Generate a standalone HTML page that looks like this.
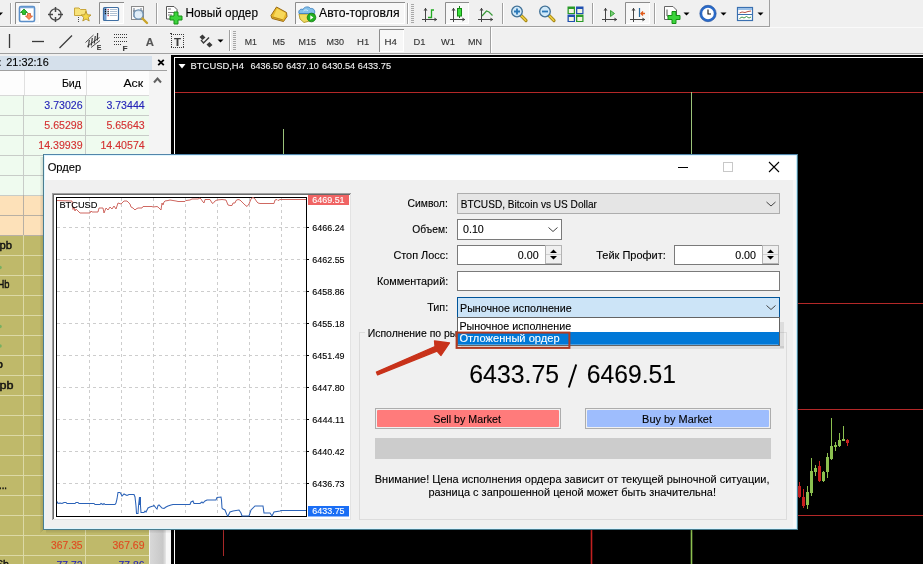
<!DOCTYPE html>
<html><head><meta charset="utf-8"><style>
html,body{margin:0;padding:0;width:923px;height:564px;overflow:hidden;background:#f0f0f0}
svg{display:block;font-family:"Liberation Sans", sans-serif;will-change:transform}
</style></head><body>
<svg width="923" height="564" viewBox="0 0 923 564">
<rect x="0" y="0" width="923" height="564" fill="#f0f0f0" />
<line x1="0" y1="26.5" x2="770" y2="26.5" stroke="#a0a0a0" stroke-width="1" />
<line x1="0" y1="27.5" x2="923" y2="27.5" stroke="#fafafa" stroke-width="1" />
<line x1="769.5" y1="0" x2="769.5" y2="26" stroke="#a0a0a0" stroke-width="1" />
<line x1="10.5" y1="3" x2="10.5" y2="24" stroke="#a0a0a0" stroke-width="1" />
<line x1="11.5" y1="3" x2="11.5" y2="24" stroke="#ffffff" stroke-width="1" />
<line x1="156.5" y1="3" x2="156.5" y2="24" stroke="#a0a0a0" stroke-width="1" />
<line x1="157.5" y1="3" x2="157.5" y2="24" stroke="#ffffff" stroke-width="1" />
<line x1="407.5" y1="3" x2="407.5" y2="24" stroke="#a0a0a0" stroke-width="1" />
<line x1="408.5" y1="3" x2="408.5" y2="24" stroke="#ffffff" stroke-width="1" />
<line x1="502.5" y1="3" x2="502.5" y2="24" stroke="#a0a0a0" stroke-width="1" />
<line x1="503.5" y1="3" x2="503.5" y2="24" stroke="#ffffff" stroke-width="1" />
<line x1="592.5" y1="3" x2="592.5" y2="24" stroke="#a0a0a0" stroke-width="1" />
<line x1="593.5" y1="3" x2="593.5" y2="24" stroke="#ffffff" stroke-width="1" />
<line x1="654.5" y1="3" x2="654.5" y2="24" stroke="#a0a0a0" stroke-width="1" />
<line x1="655.5" y1="3" x2="655.5" y2="24" stroke="#ffffff" stroke-width="1" />
<rect x="15" y="2" width="25" height="22" fill="#f7f7f7" />
<path d="M15.5 24 V2.5 H40" stroke="#8c8c8c" fill="none"/>
<path d="M16 23.5 H39.5 V3" stroke="#ffffff" fill="none"/>
<rect x="99" y="2" width="25" height="22" fill="#f7f7f7" />
<path d="M99.5 24 V2.5 H124" stroke="#8c8c8c" fill="none"/>
<path d="M100 23.5 H123.5 V3" stroke="#ffffff" fill="none"/>
<rect x="295" y="2" width="110" height="22" fill="#f7f7f7" />
<path d="M295.5 24 V2.5 H405" stroke="#8c8c8c" fill="none"/>
<path d="M296 23.5 H404.5 V3" stroke="#ffffff" fill="none"/>
<rect x="445" y="2" width="24" height="22" fill="#f7f7f7" />
<path d="M445.5 24 V2.5 H469" stroke="#8c8c8c" fill="none"/>
<path d="M446 23.5 H468.5 V3" stroke="#ffffff" fill="none"/>
<rect x="625" y="2" width="25" height="22" fill="#f7f7f7" />
<path d="M625.5 24 V2.5 H650" stroke="#8c8c8c" fill="none"/>
<path d="M626 23.5 H649.5 V3" stroke="#ffffff" fill="none"/>
<path d="M-3 12.5 H3 L0 15.5 Z" fill="#000"/>
<path d="M683.5 12.5 H689.5 L686.5 15.5 Z" fill="#000"/>
<path d="M720.5 12.5 H726.5 L723.5 15.5 Z" fill="#000"/>
<path d="M757.5 12.5 H763.5 L760.5 15.5 Z" fill="#000"/>
<rect x="19.5" y="6.5" width="15" height="15" rx="1.5" fill="#fff" stroke="#5b8fc9" stroke-width="1.6"/>
<path d="M20 7.5 H34" stroke="#7aa7d8" stroke-width="1.5"/>
<path d="M24 9 L27.5 12.5 H25.5 V14.5 H22.5 V12.5 H20.5 Z" fill="#2fc42f" stroke="#138a13" stroke-width=".8"/>
<path d="M29 19.5 L32.5 16 H30.5 V13.5 H27.5 V16 H25.5 Z" fill="#ff8a5a" stroke="#d05a2a" stroke-width=".8"/>
<circle cx="55.5" cy="14.5" r="5.6" fill="none" stroke="#474747" stroke-width="1.3"/>
<path d="M55.5 7 V12 M55.5 17 V22 M48 14.5 H53 M58 14.5 H63" stroke="#474747" stroke-width="1.5"/>
<path d="M74.5 8 H79 L80.5 9.5 H86 V15.5 H74.5 Z" fill="#f7e27a" stroke="#c9a63a" stroke-width="1"/>
<path d="M86 11.2 L87.4 14.8 L91 15 L88.2 17.4 L89.2 21 L86 19 L82.8 21 L83.8 17.4 L81 15 L84.6 14.8 Z" fill="#f5d848" stroke="#b8942a" stroke-width=".9"/>
<path d="M78.5 17 V17.8 M78.5 19.2 V20 M78.5 21.2 V22" stroke="#222" stroke-width="1"/>
<rect x="103.5" y="7.5" width="15" height="13" rx="1" fill="#fff" stroke="#3f6fa3" stroke-width="1.2"/>
<rect x="104" y="8" width="2.5" height="12" fill="#6d9bd0"/>
<rect x="107.5" y="8.9" width="1.3" height="1.3" fill="#b03050"/>
<path d="M110 9.5 H117" stroke="#9ab0c8" stroke-width=".8"/>
<rect x="107.5" y="10.9" width="1.3" height="1.3" fill="#222"/>
<path d="M110 11.5 H117" stroke="#9ab0c8" stroke-width=".8"/>
<rect x="107.5" y="12.9" width="1.3" height="1.3" fill="#222"/>
<path d="M110 13.5 H117" stroke="#9ab0c8" stroke-width=".8"/>
<rect x="107.5" y="14.9" width="1.3" height="1.3" fill="#b03050"/>
<path d="M110 15.5 H117" stroke="#9ab0c8" stroke-width=".8"/>
<rect x="104.8" y="8.9" width="1.3" height="1.3" fill="#111"/>
<rect x="104.8" y="10.9" width="1.3" height="1.3" fill="#111"/>
<rect x="104.8" y="12.9" width="1.3" height="1.3" fill="#111"/>
<rect x="131.5" y="6.5" width="12" height="13" fill="#fafafa" stroke="#8a8a8a"/>
<path d="M134 8 V17 M141 8 V14 M133 11 H143" stroke="#5a6a7a" stroke-width=".9"/>
<circle cx="138.5" cy="14.5" r="4.6" fill="#dcebf7" fill-opacity=".85" stroke="#6b8fb0" stroke-width="1.3"/>
<path d="M142.5 18.5 L147 23" stroke="#c9a42a" stroke-width="2.4" stroke-linecap="round"/>
<path d="M166.5 6.5 H174 L177 9.5 V19 H166.5 Z" fill="#fff" stroke="#555" stroke-width="1"/>
<path d="M168 9 H171 M168 12.5 H174 M168 15 H172" stroke="#777" stroke-width="1"/>
<path d="M174 12 H178 V16 H182 V20 H178 V24 H174 V20 H170 V16 H174 Z" fill="#3cd43c" stroke="#169016" stroke-width="1"/>
<text x="185.4" y="17" font-size="11.9" fill="#000" stroke="#000" stroke-width="0.12" text-anchor="start" textLength="72.6" lengthAdjust="spacingAndGlyphs" >Новый ордер</text>
<path d="M276.5 7 L286.5 12.5 L287 16.5 L283.5 21.5 L272 18.5 L271 15.5 Z" fill="#e9b92a" stroke="#9a6a14" stroke-width="1" stroke-linejoin="round"/>
<path d="M277 8.5 L285.5 13 L283 19.5 L273.5 16.5 Z" fill="#f8d85a"/>
<path d="M272.5 17 L283 20" stroke="#b8841e" stroke-width="1"/>
<path d="M299 14 L315 14 L313 20 L304 22.5 L300 19 Z" fill="#f0dc60" stroke="#b0962a" stroke-width=".9" stroke-linejoin="round"/>
<path d="M299 13.5 C298 10 301 8.5 303 9.5 C304 6.5 309 6 310.5 8.5 C313 8 315.5 10 314.5 13.5 Z" fill="#84c0ea" stroke="#3a80c0" stroke-width=".9"/>
<path d="M303.5 11 C305 9.5 307 9.5 308 11" stroke="#d8f0ff" stroke-width=".9" fill="none"/>
<circle cx="311.5" cy="17.5" r="4.3" fill="#22b022" stroke="#0e7a0e" stroke-width=".8"/>
<path d="M310.3 15.2 V19.8 L313.4 17.5 Z" fill="#fff"/>
<text x="319" y="17" font-size="11.9" fill="#000" stroke="#000" stroke-width="0.12" text-anchor="start" textLength="80.5" lengthAdjust="spacingAndGlyphs" >Авто-торговля</text>
<line x1="411" y1="4.5" x2="414" y2="4.5" stroke="#a8a8a8" stroke-width="1" />
<line x1="411" y1="6.5" x2="414" y2="6.5" stroke="#a8a8a8" stroke-width="1" />
<line x1="411" y1="8.5" x2="414" y2="8.5" stroke="#a8a8a8" stroke-width="1" />
<line x1="411" y1="10.5" x2="414" y2="10.5" stroke="#a8a8a8" stroke-width="1" />
<line x1="411" y1="12.5" x2="414" y2="12.5" stroke="#a8a8a8" stroke-width="1" />
<line x1="411" y1="14.5" x2="414" y2="14.5" stroke="#a8a8a8" stroke-width="1" />
<line x1="411" y1="16.5" x2="414" y2="16.5" stroke="#a8a8a8" stroke-width="1" />
<line x1="411" y1="18.5" x2="414" y2="18.5" stroke="#a8a8a8" stroke-width="1" />
<line x1="411" y1="20.5" x2="414" y2="20.5" stroke="#a8a8a8" stroke-width="1" />
<line x1="411" y1="22.5" x2="414" y2="22.5" stroke="#a8a8a8" stroke-width="1" />
<path d="M425.5 8 V22 M422 19.5 H437" stroke="#444" stroke-width="1"/>
<path d="M423.5 10.5 L425.5 8 L427.5 10.5 Z M434.5 17.5 L437 19.5 L434.5 21.5 Z" fill="#444"/>
<path d="M428 17.5 H431.5 V10 H434" stroke="#22aa22" stroke-width="1.3" fill="none"/>
<path d="M453.5 8 V22 M450 19.5 H465" stroke="#444" stroke-width="1"/>
<path d="M451.5 10.5 L453.5 8 L455.5 10.5 Z M462.5 17.5 L465 19.5 L462.5 21.5 Z" fill="#444"/>
<path d="M459.5 6 V18" stroke="#1a7a1a" stroke-width="1"/>
<rect x="457.5" y="8.5" width="4" height="7.5" fill="#3ce03c" stroke="#168816" stroke-width="1"/>
<path d="M481.5 8 V22 M478 19.5 H493" stroke="#444" stroke-width="1"/>
<path d="M479.5 10.5 L481.5 8 L483.5 10.5 Z M490.5 17.5 L493 19.5 L490.5 21.5 Z" fill="#444"/>
<path d="M482 16 L486.5 11 L489 12 L492.5 15.5" stroke="#3a9a3a" stroke-width="1.2" fill="none"/>
<path d="M520.5 15.0 L526 20.5" stroke="#a88a1a" stroke-width="3.2" stroke-linecap="round"/>
<path d="M520.8 15.3 L525.7 20.2" stroke="#f0d040" stroke-width="1.6" stroke-linecap="round"/>
<circle cx="517" cy="11.5" r="5.3" fill="#cfe8f8" stroke="#3f6f95" stroke-width="1.3"/>
<path d="M514 11.5 H520 M517 8.5 V14.5" stroke="#2a78b8" stroke-width="1.8"/>
<path d="M548.5 15.0 L554 20.5" stroke="#a88a1a" stroke-width="3.2" stroke-linecap="round"/>
<path d="M548.8 15.3 L553.7 20.2" stroke="#f0d040" stroke-width="1.6" stroke-linecap="round"/>
<circle cx="545" cy="11.5" r="5.3" fill="#cfe8f8" stroke="#3f6f95" stroke-width="1.3"/>
<path d="M542 11.5 H548" stroke="#2a78b8" stroke-width="1.8"/>
<rect x="567.5" y="6.5" width="7.5" height="7.5" fill="#2a9a2a"/>
<rect x="568.8" y="9" width="5" height="4" fill="#f4f4e0"/>
<rect x="576.0" y="6.5" width="7.5" height="7.5" fill="#2050b0"/>
<rect x="577.3" y="9" width="5" height="4" fill="#f4f4e0"/>
<rect x="567.5" y="14.5" width="7.5" height="7.5" fill="#2050b0"/>
<rect x="568.8" y="17" width="5" height="4" fill="#f4f4e0"/>
<rect x="576.0" y="14.5" width="7.5" height="7.5" fill="#2a9a2a"/>
<rect x="577.3" y="17" width="5" height="4" fill="#f4f4e0"/>
<path d="M605.5 8 V22 M602 19.5 H617" stroke="#444" stroke-width="1"/>
<path d="M603.5 10.5 L605.5 8 L607.5 10.5 Z M614.5 17.5 L617 19.5 L614.5 21.5 Z" fill="#444"/>
<path d="M610.5 10.5 V16.5 L614.5 13.5 Z" fill="#7ad07a" stroke="#2a9a2a" stroke-width=".9"/>
<path d="M633.5 8 V22 M630 19.5 H645" stroke="#444" stroke-width="1"/>
<path d="M631.5 10.5 L633.5 8 L635.5 10.5 Z M642.5 17.5 L645 19.5 L642.5 21.5 Z" fill="#444"/>
<path d="M639.5 8 V17" stroke="#2a6a9a" stroke-width="1.2"/>
<path d="M645 13.5 H641 M643 11.5 L641 13.5 L643 15.5" stroke="#e05a1a" stroke-width="1.3" fill="none"/>
<path d="M664.5 6.5 H673 L676.5 10 V19.5 H664.5 Z" fill="#fff" stroke="#666" stroke-width="1"/>
<path d="M667 9.5 V16 H670" stroke="#555" stroke-width="1" fill="none"/>
<path d="M672 11.5 H676 V15.5 H680 V19.5 H676 V23.5 H672 V19.5 H668 V15.5 H672 Z" fill="#3cd43c" stroke="#169016" stroke-width="1"/>
<circle cx="708" cy="13.5" r="7" fill="#fff" stroke="#2a6ac8" stroke-width="2.4"/>
<circle cx="708" cy="13.5" r="8.2" fill="none" stroke="#1a4a98" stroke-width=".6"/>
<path d="M708 9.5 V14 H711" stroke="#111" stroke-width="1.1" fill="none"/>
<rect x="737.5" y="7.5" width="15" height="13" fill="#fff" stroke="#3a70b0" stroke-width="1.2"/>
<rect x="738" y="8" width="14" height="2" fill="#9ac0e8"/>
<path d="M738 14.5 H752" stroke="#3a70b0" stroke-width="1"/>
<path d="M739.5 13 L742 12 L745 12.5 L748 11.5 L751 11" stroke="#b03a2a" stroke-width=".9" fill="none"/>
<path d="M739.5 18.5 L742 17 L744 18 L746.5 16.5 L749 18 L751 17" stroke="#2a8a3a" stroke-width=".9" fill="none"/>
<line x1="0" y1="53.5" x2="923" y2="53.5" stroke="#a0a0a0" stroke-width="1" />
<line x1="490.5" y1="27" x2="490.5" y2="53" stroke="#a0a0a0" stroke-width="1" />
<line x1="491.5" y1="27" x2="491.5" y2="53" stroke="#ffffff" stroke-width="1" />
<line x1="229.5" y1="30" x2="229.5" y2="51" stroke="#a0a0a0" stroke-width="1" />
<line x1="230.5" y1="30" x2="230.5" y2="51" stroke="#ffffff" stroke-width="1" />
<rect x="379" y="29" width="25" height="23" fill="#f7f7f7" />
<path d="M379.5 52 V29.5 H404" stroke="#8c8c8c" fill="none"/>
<path d="M380 51.5 H403.5 V30" stroke="#ffffff" fill="none"/>
<line x1="233" y1="31.5" x2="236" y2="31.5" stroke="#a8a8a8" stroke-width="1" />
<line x1="233" y1="33.5" x2="236" y2="33.5" stroke="#a8a8a8" stroke-width="1" />
<line x1="233" y1="35.5" x2="236" y2="35.5" stroke="#a8a8a8" stroke-width="1" />
<line x1="233" y1="37.5" x2="236" y2="37.5" stroke="#a8a8a8" stroke-width="1" />
<line x1="233" y1="39.5" x2="236" y2="39.5" stroke="#a8a8a8" stroke-width="1" />
<line x1="233" y1="41.5" x2="236" y2="41.5" stroke="#a8a8a8" stroke-width="1" />
<line x1="233" y1="43.5" x2="236" y2="43.5" stroke="#a8a8a8" stroke-width="1" />
<line x1="233" y1="45.5" x2="236" y2="45.5" stroke="#a8a8a8" stroke-width="1" />
<line x1="233" y1="47.5" x2="236" y2="47.5" stroke="#a8a8a8" stroke-width="1" />
<line x1="233" y1="49.5" x2="236" y2="49.5" stroke="#a8a8a8" stroke-width="1" />
<path d="M9.5 34 V48" stroke="#3a3a3a" stroke-width="1.3"/>
<path d="M32 41.5 H44" stroke="#3a3a3a" stroke-width="1.3"/>
<path d="M59.5 48 L72 35.5" stroke="#3a3a3a" stroke-width="1.3"/>
<path d="M85.5 42.5 L93.5 35 M87 46.5 L99.5 37.5 M91 47.5 L100 40.5" stroke="#3a3a3a" stroke-width="0.9" fill="none"/>
<path d="M88.3 47.5 L89.3 40 M91.3 45.5 L92.3 38 M94.3 43.5 L95.3 36 M97.3 40.5 L97.6 33" stroke="#3a3a3a" stroke-width="1.2" fill="none"/>
<text x="96.8" y="50" font-size="7" fill="#3a3a3a" stroke="#3a3a3a" stroke-width="0.12" text-anchor="start" textLength="4.6" lengthAdjust="spacingAndGlyphs" font-weight="bold">E</text>
<path d="M114 34h1v1h-1z M116 34h1v1h-1z M118 34h1v1h-1z M120 34h1v1h-1z M122 34h1v1h-1z M124 34h1v1h-1z M126 34h1v1h-1z M114 37h1v1h-1z M116 37h1v1h-1z M118 37h1v1h-1z M120 37h1v1h-1z M122 37h1v1h-1z M124 37h1v1h-1z M126 37h1v1h-1z M114 41h1v1h-1z M116 41h1v1h-1z M118 41h1v1h-1z M120 41h1v1h-1z M122 41h1v1h-1z M124 41h1v1h-1z M126 41h1v1h-1z M114 44h1v1h-1z M116 44h1v1h-1z M118 44h1v1h-1z M120 44h1v1h-1z" fill="#3a3a3a"/>
<text x="122.5" y="50.5" font-size="7" fill="#3a3a3a" stroke="#3a3a3a" stroke-width="0.12" text-anchor="start" textLength="5" lengthAdjust="spacingAndGlyphs" font-weight="bold">F</text>
<text x="145.8" y="46.2" font-size="11.5" fill="#555" stroke="#555" stroke-width="0.12" text-anchor="start" textLength="8.2" lengthAdjust="spacingAndGlyphs" font-weight="bold">A</text>
<path d="M171 34h1v1h-1z M171 47h1v1h-1z M173 34h1v1h-1z M173 47h1v1h-1z M175 34h1v1h-1z M175 47h1v1h-1z M177 34h1v1h-1z M177 47h1v1h-1z M179 34h1v1h-1z M179 47h1v1h-1z M181 34h1v1h-1z M181 47h1v1h-1z M183 34h1v1h-1z M183 47h1v1h-1z M171 36h1v1h-1z M183 36h1v1h-1z M171 38h1v1h-1z M183 38h1v1h-1z M171 40h1v1h-1z M183 40h1v1h-1z M171 42h1v1h-1z M183 42h1v1h-1z M171 44h1v1h-1z M183 44h1v1h-1z M171 46h1v1h-1z M183 46h1v1h-1z" fill="#3a3a3a"/>
<path d="M170 33h2v1h-2z" fill="#3a3a3a"/>
<text x="174" y="45.8" font-size="10.5" fill="#3a3a3a" stroke="#3a3a3a" stroke-width="0.12" text-anchor="start" textLength="7" lengthAdjust="spacingAndGlyphs" font-weight="bold">T</text>
<path d="M199.5 37 L202.5 34.5 L205.5 37.5 L202.5 40 Z M206.5 44.5 L209.5 42 L212.5 45 L209.5 47.5 Z" fill="#3a3a3a"/>
<path d="M201 40 L203.5 43 L209 37.5" stroke="#3a3a3a" stroke-width="1.4" fill="none"/>
<path d="M217.5 39.5 H223.5 L220.5 42.5 Z" fill="#000"/>
<text x="244.8" y="44.8" font-size="9.3" fill="#333" stroke="#333" stroke-width="0.12" text-anchor="start" textLength="12.2" lengthAdjust="spacingAndGlyphs" >M1</text>
<text x="272.5" y="44.8" font-size="9.3" fill="#333" stroke="#333" stroke-width="0.12" text-anchor="start" textLength="12.5" lengthAdjust="spacingAndGlyphs" >M5</text>
<text x="298.5" y="44.8" font-size="9.3" fill="#333" stroke="#333" stroke-width="0.12" text-anchor="start" textLength="17.5" lengthAdjust="spacingAndGlyphs" >M15</text>
<text x="326.5" y="44.8" font-size="9.3" fill="#333" stroke="#333" stroke-width="0.12" text-anchor="start" textLength="17.5" lengthAdjust="spacingAndGlyphs" >M30</text>
<text x="357" y="44.8" font-size="9.3" fill="#333" stroke="#333" stroke-width="0.12" text-anchor="start" textLength="12.2" lengthAdjust="spacingAndGlyphs" >H1</text>
<text x="384.6" y="44.8" font-size="9.3" fill="#333" stroke="#333" stroke-width="0.12" text-anchor="start" textLength="12.4" lengthAdjust="spacingAndGlyphs" >H4</text>
<text x="413.5" y="44.8" font-size="9.3" fill="#333" stroke="#333" stroke-width="0.12" text-anchor="start" textLength="12" lengthAdjust="spacingAndGlyphs" >D1</text>
<text x="441" y="44.8" font-size="9.3" fill="#333" stroke="#333" stroke-width="0.12" text-anchor="start" textLength="14" lengthAdjust="spacingAndGlyphs" >W1</text>
<text x="468" y="44.8" font-size="9.3" fill="#333" stroke="#333" stroke-width="0.12" text-anchor="start" textLength="14" lengthAdjust="spacingAndGlyphs" >MN</text>
<rect x="0" y="54" width="171" height="510" fill="#f0f0f0" />
<rect x="0" y="56" width="152" height="14" fill="#d5e0eb" />
<rect x="0" y="70" width="149" height="25" fill="#fdfdfd" />
<line x1="24.5" y1="70" x2="24.5" y2="95" stroke="#e0e0e0" stroke-width="1" />
<line x1="86.5" y1="70" x2="86.5" y2="95" stroke="#e0e0e0" stroke-width="1" />
<line x1="0" y1="95.5" x2="149" y2="95.5" stroke="#d8d8d8" stroke-width="1" />
<rect x="0" y="96" width="149" height="19" fill="#effbef" />
<line x1="0" y1="115.5" x2="149" y2="115.5" stroke="#c8ccc8" stroke-width="1" />
<line x1="23.5" y1="95" x2="23.5" y2="115" stroke="#c8ccc8" stroke-width="1" />
<line x1="85.5" y1="95" x2="85.5" y2="115" stroke="#c8ccc8" stroke-width="1" />
<rect x="0" y="116" width="149" height="19" fill="#effbef" />
<line x1="0" y1="135.5" x2="149" y2="135.5" stroke="#c8ccc8" stroke-width="1" />
<line x1="23.5" y1="115" x2="23.5" y2="135" stroke="#c8ccc8" stroke-width="1" />
<line x1="85.5" y1="115" x2="85.5" y2="135" stroke="#c8ccc8" stroke-width="1" />
<rect x="0" y="136" width="149" height="19" fill="#effbef" />
<line x1="0" y1="155.5" x2="149" y2="155.5" stroke="#c8ccc8" stroke-width="1" />
<line x1="23.5" y1="135" x2="23.5" y2="155" stroke="#c8ccc8" stroke-width="1" />
<line x1="85.5" y1="135" x2="85.5" y2="155" stroke="#c8ccc8" stroke-width="1" />
<rect x="0" y="156" width="149" height="19" fill="#effbef" />
<line x1="0" y1="175.5" x2="149" y2="175.5" stroke="#c8ccc8" stroke-width="1" />
<line x1="23.5" y1="155" x2="23.5" y2="175" stroke="#c8ccc8" stroke-width="1" />
<line x1="85.5" y1="155" x2="85.5" y2="175" stroke="#c8ccc8" stroke-width="1" />
<rect x="0" y="176" width="149" height="19" fill="#effbef" />
<line x1="0" y1="195.5" x2="149" y2="195.5" stroke="#c8ccc8" stroke-width="1" />
<line x1="23.5" y1="175" x2="23.5" y2="195" stroke="#c8ccc8" stroke-width="1" />
<line x1="85.5" y1="175" x2="85.5" y2="195" stroke="#c8ccc8" stroke-width="1" />
<rect x="0" y="196" width="149" height="19" fill="#fde1b9" />
<line x1="0" y1="215.5" x2="149" y2="215.5" stroke="#b8b0a4" stroke-width="1" />
<line x1="23.5" y1="195" x2="23.5" y2="215" stroke="#b8b0a4" stroke-width="1" />
<line x1="85.5" y1="195" x2="85.5" y2="215" stroke="#b8b0a4" stroke-width="1" />
<rect x="0" y="216" width="149" height="19" fill="#fde1b9" />
<line x1="0" y1="235.5" x2="149" y2="235.5" stroke="#b8b0a4" stroke-width="1" />
<line x1="23.5" y1="215" x2="23.5" y2="235" stroke="#b8b0a4" stroke-width="1" />
<line x1="85.5" y1="215" x2="85.5" y2="235" stroke="#b8b0a4" stroke-width="1" />
<rect x="0" y="236" width="149" height="19" fill="#bfb96a" />
<line x1="0" y1="255.5" x2="149" y2="255.5" stroke="#dcd9a6" stroke-width="1" />
<line x1="23.5" y1="235" x2="23.5" y2="255" stroke="#dcd9a6" stroke-width="1" />
<line x1="85.5" y1="235" x2="85.5" y2="255" stroke="#dcd9a6" stroke-width="1" />
<rect x="0" y="256" width="149" height="19" fill="#bfb96a" />
<line x1="0" y1="275.5" x2="149" y2="275.5" stroke="#dcd9a6" stroke-width="1" />
<line x1="23.5" y1="255" x2="23.5" y2="275" stroke="#dcd9a6" stroke-width="1" />
<line x1="85.5" y1="255" x2="85.5" y2="275" stroke="#dcd9a6" stroke-width="1" />
<rect x="0" y="276" width="149" height="19" fill="#bfb96a" />
<line x1="0" y1="295.5" x2="149" y2="295.5" stroke="#dcd9a6" stroke-width="1" />
<line x1="23.5" y1="275" x2="23.5" y2="295" stroke="#dcd9a6" stroke-width="1" />
<line x1="85.5" y1="275" x2="85.5" y2="295" stroke="#dcd9a6" stroke-width="1" />
<rect x="0" y="296" width="149" height="19" fill="#bfb96a" />
<line x1="0" y1="315.5" x2="149" y2="315.5" stroke="#dcd9a6" stroke-width="1" />
<line x1="23.5" y1="295" x2="23.5" y2="315" stroke="#dcd9a6" stroke-width="1" />
<line x1="85.5" y1="295" x2="85.5" y2="315" stroke="#dcd9a6" stroke-width="1" />
<rect x="0" y="316" width="149" height="19" fill="#bfb96a" />
<line x1="0" y1="335.5" x2="149" y2="335.5" stroke="#dcd9a6" stroke-width="1" />
<line x1="23.5" y1="315" x2="23.5" y2="335" stroke="#dcd9a6" stroke-width="1" />
<line x1="85.5" y1="315" x2="85.5" y2="335" stroke="#dcd9a6" stroke-width="1" />
<rect x="0" y="336" width="149" height="19" fill="#bfb96a" />
<line x1="0" y1="355.5" x2="149" y2="355.5" stroke="#dcd9a6" stroke-width="1" />
<line x1="23.5" y1="335" x2="23.5" y2="355" stroke="#dcd9a6" stroke-width="1" />
<line x1="85.5" y1="335" x2="85.5" y2="355" stroke="#dcd9a6" stroke-width="1" />
<rect x="0" y="356" width="149" height="19" fill="#bfb96a" />
<line x1="0" y1="375.5" x2="149" y2="375.5" stroke="#dcd9a6" stroke-width="1" />
<line x1="23.5" y1="355" x2="23.5" y2="375" stroke="#dcd9a6" stroke-width="1" />
<line x1="85.5" y1="355" x2="85.5" y2="375" stroke="#dcd9a6" stroke-width="1" />
<rect x="0" y="376" width="149" height="19" fill="#bfb96a" />
<line x1="0" y1="395.5" x2="149" y2="395.5" stroke="#dcd9a6" stroke-width="1" />
<line x1="23.5" y1="375" x2="23.5" y2="395" stroke="#dcd9a6" stroke-width="1" />
<line x1="85.5" y1="375" x2="85.5" y2="395" stroke="#dcd9a6" stroke-width="1" />
<rect x="0" y="396" width="149" height="19" fill="#bfb96a" />
<line x1="0" y1="415.5" x2="149" y2="415.5" stroke="#dcd9a6" stroke-width="1" />
<line x1="23.5" y1="395" x2="23.5" y2="415" stroke="#dcd9a6" stroke-width="1" />
<line x1="85.5" y1="395" x2="85.5" y2="415" stroke="#dcd9a6" stroke-width="1" />
<rect x="0" y="416" width="149" height="19" fill="#bfb96a" />
<line x1="0" y1="435.5" x2="149" y2="435.5" stroke="#dcd9a6" stroke-width="1" />
<line x1="23.5" y1="415" x2="23.5" y2="435" stroke="#dcd9a6" stroke-width="1" />
<line x1="85.5" y1="415" x2="85.5" y2="435" stroke="#dcd9a6" stroke-width="1" />
<rect x="0" y="436" width="149" height="19" fill="#bfb96a" />
<line x1="0" y1="455.5" x2="149" y2="455.5" stroke="#dcd9a6" stroke-width="1" />
<line x1="23.5" y1="435" x2="23.5" y2="455" stroke="#dcd9a6" stroke-width="1" />
<line x1="85.5" y1="435" x2="85.5" y2="455" stroke="#dcd9a6" stroke-width="1" />
<rect x="0" y="456" width="149" height="19" fill="#bfb96a" />
<line x1="0" y1="475.5" x2="149" y2="475.5" stroke="#dcd9a6" stroke-width="1" />
<line x1="23.5" y1="455" x2="23.5" y2="475" stroke="#dcd9a6" stroke-width="1" />
<line x1="85.5" y1="455" x2="85.5" y2="475" stroke="#dcd9a6" stroke-width="1" />
<rect x="0" y="476" width="149" height="19" fill="#bfb96a" />
<line x1="0" y1="495.5" x2="149" y2="495.5" stroke="#dcd9a6" stroke-width="1" />
<line x1="23.5" y1="475" x2="23.5" y2="495" stroke="#dcd9a6" stroke-width="1" />
<line x1="85.5" y1="475" x2="85.5" y2="495" stroke="#dcd9a6" stroke-width="1" />
<rect x="0" y="496" width="149" height="19" fill="#bfb96a" />
<line x1="0" y1="515.5" x2="149" y2="515.5" stroke="#dcd9a6" stroke-width="1" />
<line x1="23.5" y1="495" x2="23.5" y2="515" stroke="#dcd9a6" stroke-width="1" />
<line x1="85.5" y1="495" x2="85.5" y2="515" stroke="#dcd9a6" stroke-width="1" />
<rect x="0" y="516" width="149" height="19" fill="#bfb96a" />
<line x1="0" y1="535.5" x2="149" y2="535.5" stroke="#dcd9a6" stroke-width="1" />
<line x1="23.5" y1="515" x2="23.5" y2="535" stroke="#dcd9a6" stroke-width="1" />
<line x1="85.5" y1="515" x2="85.5" y2="535" stroke="#dcd9a6" stroke-width="1" />
<rect x="0" y="536" width="149" height="19" fill="#bfb96a" />
<line x1="0" y1="555.5" x2="149" y2="555.5" stroke="#dcd9a6" stroke-width="1" />
<line x1="23.5" y1="535" x2="23.5" y2="555" stroke="#dcd9a6" stroke-width="1" />
<line x1="85.5" y1="535" x2="85.5" y2="555" stroke="#dcd9a6" stroke-width="1" />
<rect x="0" y="556" width="149" height="19" fill="#bfb96a" />
<line x1="0" y1="575.5" x2="149" y2="575.5" stroke="#dcd9a6" stroke-width="1" />
<line x1="23.5" y1="555" x2="23.5" y2="575" stroke="#dcd9a6" stroke-width="1" />
<line x1="85.5" y1="555" x2="85.5" y2="575" stroke="#dcd9a6" stroke-width="1" />
<rect x="149" y="70" width="22" height="494" fill="#f4f4f4" />
<line x1="0" y1="70.5" x2="167" y2="70.5" stroke="#a0a0a0" stroke-width="1" />
<text x="-1.5" y="65.6" font-size="10.6" fill="#000" stroke="#000" stroke-width="0.12" text-anchor="start" >:</text>
<text x="6.3" y="65.6" font-size="10.6" fill="#000" stroke="#000" stroke-width="0.12" text-anchor="start" textLength="42.4" lengthAdjust="spacingAndGlyphs" >21:32:16</text>
<path d="M158.2 59.8 L163.8 65.2 M163.8 59.8 L158.2 65.2" stroke="#000" stroke-width="1.8"/>
<text x="80.9" y="86.6" font-size="10.6" fill="#000" stroke="#000" stroke-width="0.12" text-anchor="end" textLength="19" lengthAdjust="spacingAndGlyphs" >Бид</text>
<text x="143" y="86.6" font-size="10.6" fill="#000" stroke="#000" stroke-width="0.12" text-anchor="end" textLength="19.6" lengthAdjust="spacingAndGlyphs" >Аск</text>
<path d="M154 82.5 L157.5 78.5 L161 82.5" stroke="#606060" stroke-width="2" fill="none"/>
<text x="82.6" y="108.6" font-size="10.6" fill="#2424b8" stroke="#2424b8" stroke-width="0.12" text-anchor="end" textLength="38.3" lengthAdjust="spacingAndGlyphs" >3.73026</text>
<text x="144.7" y="108.6" font-size="10.6" fill="#2424b8" stroke="#2424b8" stroke-width="0.12" text-anchor="end" textLength="38.3" lengthAdjust="spacingAndGlyphs" >3.73444</text>
<text x="82.6" y="128.6" font-size="10.6" fill="#d43030" stroke="#d43030" stroke-width="0.12" text-anchor="end" textLength="38.3" lengthAdjust="spacingAndGlyphs" >5.65298</text>
<text x="144.7" y="128.6" font-size="10.6" fill="#d43030" stroke="#d43030" stroke-width="0.12" text-anchor="end" textLength="38.3" lengthAdjust="spacingAndGlyphs" >5.65643</text>
<text x="82.6" y="148.5" font-size="10.6" fill="#d43030" stroke="#d43030" stroke-width="0.12" text-anchor="end" textLength="44.3" lengthAdjust="spacingAndGlyphs" >14.39939</text>
<text x="144.7" y="148.5" font-size="10.6" fill="#d43030" stroke="#d43030" stroke-width="0.12" text-anchor="end" textLength="44.3" lengthAdjust="spacingAndGlyphs" >14.40574</text>
<text x="82.6" y="548.8" font-size="10.6" fill="#e04a20" stroke="#e04a20" stroke-width="0.12" text-anchor="end" textLength="31.5" lengthAdjust="spacingAndGlyphs" >367.35</text>
<text x="144.5" y="548.8" font-size="10.6" fill="#e04a20" stroke="#e04a20" stroke-width="0.12" text-anchor="end" textLength="32" lengthAdjust="spacingAndGlyphs" >367.69</text>
<text x="82.6" y="568.5" font-size="10.6" fill="#2424b8" stroke="#2424b8" stroke-width="0.12" text-anchor="end" textLength="26" lengthAdjust="spacingAndGlyphs" >77.72</text>
<text x="144.5" y="568.5" font-size="10.6" fill="#2424b8" stroke="#2424b8" stroke-width="0.12" text-anchor="end" textLength="26" lengthAdjust="spacingAndGlyphs" >77.86</text>
<text x="-0.5" y="248.5" font-size="11.5" fill="#111" stroke="#111" stroke-width="0.45" text-anchor="start" textLength="12.5" lengthAdjust="spacingAndGlyphs" >pb</text>
<text x="-2.5" y="288.4" font-size="11.5" fill="#111" stroke="#111" stroke-width="0.45" text-anchor="start" textLength="12" lengthAdjust="spacingAndGlyphs" >Hb</text>
<text x="-4" y="367.6" font-size="11.5" fill="#111" stroke="#111" stroke-width="0.45" text-anchor="start" textLength="7" lengthAdjust="spacingAndGlyphs" >o</text>
<text x="-0.5" y="388.5" font-size="11.5" fill="#111" stroke="#111" stroke-width="0.45" text-anchor="start" textLength="14" lengthAdjust="spacingAndGlyphs" >pb</text>
<text x="-1" y="488.5" font-size="11.5" fill="#111" stroke="#111" stroke-width="0.45" text-anchor="start" textLength="8" lengthAdjust="spacingAndGlyphs" >...</text>
<text x="-4" y="568" font-size="11.5" fill="#111" stroke="#111" stroke-width="0.45" text-anchor="start" textLength="13" lengthAdjust="spacingAndGlyphs" >Sh</text>
<circle cx="0" cy="267.5" r="1.8" fill="#78b060"/>
<circle cx="0" cy="326.5" r="1.8" fill="#78b060"/>
<circle cx="0" cy="346" r="1.8" fill="#78b060"/>
<defs><linearGradient id="thumb" x1="0" x2="1"><stop offset="0" stop-color="#d8d8d8"/><stop offset="0.8" stop-color="#c8c8c8"/><stop offset="1" stop-color="#e8e8e8"/></linearGradient></defs>
<rect x="150" y="530" width="16" height="34" fill="url(#thumb)" />
<rect x="166" y="530" width="5" height="34" fill="#f8f8f8" />
<rect x="171" y="55" width="752" height="509" fill="#000000" />
<line x1="174.5" y1="57" x2="174.5" y2="564" stroke="#ffffff" stroke-width="1" />
<line x1="174" y1="57.5" x2="923" y2="57.5" stroke="#ffffff" stroke-width="1" />
<line x1="175" y1="92.5" x2="923" y2="92.5" stroke="#b42828" stroke-width="1.2" />
<line x1="175" y1="303.5" x2="923" y2="303.5" stroke="#b42828" stroke-width="1.2" />
<line x1="175" y1="409.5" x2="923" y2="409.5" stroke="#b42828" stroke-width="1.2" />
<line x1="175" y1="515.5" x2="923" y2="515.5" stroke="#b42828" stroke-width="1.2" />
<line x1="283.5" y1="129" x2="283.5" y2="154" stroke="#9bc37a" stroke-width="1" />
<line x1="691.5" y1="92" x2="691.5" y2="154" stroke="#9bc37a" stroke-width="1" />
<line x1="223.5" y1="530" x2="223.5" y2="556" stroke="#a82828" stroke-width="1" />
<line x1="591.5" y1="530" x2="591.5" y2="564" stroke="#c02020" stroke-width="1.6" />
<line x1="691.5" y1="530" x2="691.5" y2="564" stroke="#8cc050" stroke-width="1.6" />
<path d="M178.5 64 H185.5 L182 68.5 Z" fill="#ffffff"/>
<text x="190.6" y="69" font-size="9.5" fill="#f0f0f0" stroke="#f0f0f0" stroke-width="0.12" text-anchor="start" textLength="53.3" lengthAdjust="spacingAndGlyphs" >BTCUSD,H4</text>
<text x="250.4" y="69" font-size="9.5" fill="#f0f0f0" stroke="#f0f0f0" stroke-width="0.12" text-anchor="start" textLength="32.6" lengthAdjust="spacingAndGlyphs" >6436.50</text>
<text x="286.3" y="69" font-size="9.5" fill="#f0f0f0" stroke="#f0f0f0" stroke-width="0.12" text-anchor="start" textLength="32.5" lengthAdjust="spacingAndGlyphs" >6437.10</text>
<text x="322" y="69" font-size="9.5" fill="#f0f0f0" stroke="#f0f0f0" stroke-width="0.12" text-anchor="start" textLength="33.2" lengthAdjust="spacingAndGlyphs" >6430.54</text>
<text x="357.8" y="69" font-size="9.5" fill="#f0f0f0" stroke="#f0f0f0" stroke-width="0.12" text-anchor="start" textLength="33.2" lengthAdjust="spacingAndGlyphs" >6433.75</text>
<line x1="799.5" y1="482" x2="799.5" y2="498" stroke="#c82020" stroke-width="1" />
<rect x="798.0" y="486" width="3" height="11" fill="#c82020" />
<line x1="803.5" y1="489" x2="803.5" y2="508" stroke="#c82020" stroke-width="1" />
<rect x="802.0" y="497" width="3" height="9" fill="#c82020" />
<line x1="807.5" y1="486" x2="807.5" y2="509" stroke="#8cc050" stroke-width="1" />
<rect x="806.0" y="492" width="3" height="13" fill="#8cc050" />
<line x1="811.5" y1="458" x2="811.5" y2="496" stroke="#8cc050" stroke-width="1" />
<rect x="810.0" y="471" width="3" height="22" fill="#8cc050" />
<line x1="815.5" y1="465" x2="815.5" y2="476" stroke="#8cc050" stroke-width="1" />
<rect x="814.0" y="468" width="3" height="4" fill="#8cc050" />
<line x1="819.5" y1="461" x2="819.5" y2="482" stroke="#c82020" stroke-width="1" />
<rect x="818.0" y="466" width="3" height="15" fill="#c82020" />
<line x1="823.5" y1="471" x2="823.5" y2="482" stroke="#8cc050" stroke-width="1" />
<rect x="822.0" y="472" width="3" height="9" fill="#8cc050" />
<line x1="827.5" y1="453" x2="827.5" y2="478" stroke="#8cc050" stroke-width="1" />
<rect x="826.0" y="457" width="3" height="15" fill="#8cc050" />
<line x1="831.5" y1="418" x2="831.5" y2="460" stroke="#8cc050" stroke-width="1" />
<rect x="830.0" y="446" width="3" height="13" fill="#8cc050" />
<line x1="835.5" y1="442" x2="835.5" y2="451" stroke="#8cc050" stroke-width="1" />
<rect x="834.0" y="445" width="3" height="2" fill="#8cc050" />
<line x1="839.5" y1="433" x2="839.5" y2="447" stroke="#8cc050" stroke-width="1" />
<rect x="838.0" y="440" width="3" height="6" fill="#8cc050" />
<line x1="843.5" y1="426" x2="843.5" y2="441" stroke="#8cc050" stroke-width="1" />
<rect x="842.0" y="439" width="3" height="2" fill="#8cc050" />
<line x1="847.5" y1="439" x2="847.5" y2="446" stroke="#c82020" stroke-width="1" />
<rect x="846.0" y="440" width="3" height="3" fill="#c82020" />
<rect x="40" y="157" width="1" height="376" fill="#000" opacity="0.04"/>
<rect x="46" y="532" width="755" height="1" fill="#000" opacity="0.04"/>
<rect x="41" y="157" width="1" height="375" fill="#000" opacity="0.07"/>
<rect x="46" y="531" width="755" height="1" fill="#000" opacity="0.07"/>
<rect x="42" y="157" width="1" height="374" fill="#000" opacity="0.11"/>
<rect x="46" y="530" width="755" height="1" fill="#000" opacity="0.11"/>
<rect x="800" y="160" width="1" height="372" fill="#000" opacity="0.024"/>
<rect x="799" y="160" width="1" height="371" fill="#000" opacity="0.042"/>
<rect x="798" y="160" width="1" height="370" fill="#000" opacity="0.066"/>
<rect x="43" y="154" width="755" height="376" fill="#f0f0f0" />
<rect x="44" y="155" width="753" height="25" fill="#ffffff" />
<line x1="43" y1="154.5" x2="798" y2="154.5" stroke="#5285aa" stroke-width="1" />
<line x1="43.5" y1="154" x2="43.5" y2="530" stroke="#4a7d90" stroke-width="1" />
<line x1="797.5" y1="154" x2="797.5" y2="530" stroke="#4a7d90" stroke-width="1" />
<line x1="43" y1="529.5" x2="798" y2="529.5" stroke="#4a7d90" stroke-width="1" />
<line x1="44" y1="155.5" x2="797" y2="155.5" stroke="#e0f6ff" stroke-width="1" />
<line x1="44.5" y1="155" x2="44.5" y2="529" stroke="#e0f6ff" stroke-width="1" />
<line x1="44" y1="528.5" x2="797" y2="528.5" stroke="#e0f6ff" stroke-width="1" />
<rect x="793" y="180" width="3" height="348" fill="#f7f7f7" />
<line x1="796.5" y1="155" x2="796.5" y2="529" stroke="#c8ecfa" stroke-width="1" />
<text x="47.7" y="170.6" font-size="11.6" fill="#000" stroke="#000" stroke-width="0.12" text-anchor="start" textLength="33.5" lengthAdjust="spacingAndGlyphs" >Ордер</text>
<path d="M678 167.5 H688" stroke="#000" stroke-width="1"/>
<rect x="723.5" y="162.5" width="9" height="9" fill="none" stroke="#c8c8c8"/>
<path d="M769 162 L779 172 M779 162 L769 172" stroke="#000" stroke-width="1.1"/>
<rect x="52" y="193" width="299" height="327" fill="#ffffff" />
<line x1="52" y1="193.5" x2="351" y2="193.5" stroke="#a0a0a0" stroke-width="1" />
<line x1="52.5" y1="193" x2="52.5" y2="520" stroke="#a0a0a0" stroke-width="1" />
<line x1="53" y1="194.5" x2="350" y2="194.5" stroke="#696969" stroke-width="1" />
<line x1="53.5" y1="194" x2="53.5" y2="519" stroke="#696969" stroke-width="1" />
<line x1="53" y1="519.5" x2="351" y2="519.5" stroke="#e3e3e3" stroke-width="1" />
<line x1="350.5" y1="194" x2="350.5" y2="520" stroke="#e3e3e3" stroke-width="1" />
<rect x="56.5" y="197.5" width="250" height="319" fill="none" stroke="#000" stroke-width="1"/>
<path d="M89.5 198 V516 M121.5 198 V516 M153.5 198 V516 M185.5 198 V516 M217.5 198 V516 M249.5 198 V516 M281.5 198 V516 M57 227.5 H306 M57 259.5 H306 M57 291.5 H306 M57 323.5 H306 M57 355.5 H306 M57 387.5 H306 M57 419.5 H306 M57 451.5 H306 M57 483.5 H306" stroke="#cdcdcd" stroke-dasharray="3 3" fill="none"/>
<path d="M307 227.5 H309 M307 259.5 H309 M307 291.5 H309 M307 323.5 H309 M307 355.5 H309 M307 387.5 H309 M307 419.5 H309 M307 451.5 H309 M307 483.5 H309" stroke="#000" fill="none"/>
<text x="312.3" y="230.9" font-size="9.9" fill="#000" stroke="#000" stroke-width="0.12" text-anchor="start" textLength="32.3" lengthAdjust="spacingAndGlyphs" >6466.24</text>
<text x="312.3" y="262.9" font-size="9.9" fill="#000" stroke="#000" stroke-width="0.12" text-anchor="start" textLength="32.3" lengthAdjust="spacingAndGlyphs" >6462.55</text>
<text x="312.3" y="294.9" font-size="9.9" fill="#000" stroke="#000" stroke-width="0.12" text-anchor="start" textLength="32.3" lengthAdjust="spacingAndGlyphs" >6458.86</text>
<text x="312.3" y="326.9" font-size="9.9" fill="#000" stroke="#000" stroke-width="0.12" text-anchor="start" textLength="32.3" lengthAdjust="spacingAndGlyphs" >6455.18</text>
<text x="312.3" y="358.9" font-size="9.9" fill="#000" stroke="#000" stroke-width="0.12" text-anchor="start" textLength="32.3" lengthAdjust="spacingAndGlyphs" >6451.49</text>
<text x="312.3" y="390.9" font-size="9.9" fill="#000" stroke="#000" stroke-width="0.12" text-anchor="start" textLength="32.3" lengthAdjust="spacingAndGlyphs" >6447.80</text>
<text x="312.3" y="422.9" font-size="9.9" fill="#000" stroke="#000" stroke-width="0.12" text-anchor="start" textLength="32.3" lengthAdjust="spacingAndGlyphs" >6444.11</text>
<text x="312.3" y="454.9" font-size="9.9" fill="#000" stroke="#000" stroke-width="0.12" text-anchor="start" textLength="32.3" lengthAdjust="spacingAndGlyphs" >6440.42</text>
<text x="312.3" y="486.9" font-size="9.9" fill="#000" stroke="#000" stroke-width="0.12" text-anchor="start" textLength="32.3" lengthAdjust="spacingAndGlyphs" >6436.73</text>
<rect x="308" y="195" width="41" height="10" fill="#f06464" />
<text x="312.3" y="202.8" font-size="9.9" fill="#ffffff" stroke="#ffffff" stroke-width="0.12" text-anchor="start" textLength="32.3" lengthAdjust="spacingAndGlyphs" >6469.51</text>
<rect x="308" y="506" width="41" height="10.5" fill="#1a6ef5" />
<text x="312.3" y="514.4" font-size="9.9" fill="#ffffff" stroke="#ffffff" stroke-width="0.12" text-anchor="start" textLength="32.3" lengthAdjust="spacingAndGlyphs" >6433.75</text>
<polyline points="57,200.5 72,201 73,209.5 74,207 75,211 76,209 80,213 90,213 91,211 92,212 98,212 99,208 103,208 104,213 106,208 108,210 110,207 112,209 114,206 116,209 118,203 121,204 124,201 127,201 130,204 131,207 133,208 135,210 136,209 138,208 142,208 143,206.5 152,206.5 153,207 157,206.5 158,207 160,209 161,210 162,203 163,205 164,202 165,201 168,200.5 170,200 176,201 178,201.5 185,201.5 186,200.5 190,200 192,199 198,199 200,198 201,199 203,202 204,203 205,199.5 210,199.5 212,203 213,203.5 215,201 217,200 222,199.5 226,200 228,205 230,205.5 232,205.5 233,203 235,203 236,200.5 238,199.5 240,200 243,203 245,205 247,206.5 249,204 251,199 252,197.8 254,197.8 255,199 257,202 258,203 260,203.5 274,203.5 275,200 277,199.5 278,200.5 280,199.5 306,199.5" fill="none" stroke="#cc6058" stroke-width="0.95"/>
<polyline points="57,501.5 58,503.5 60,503 62,503.5 64,502.5 66,502.5 67,503.5 75,503.5 76,502.5 78,502.5 79,503.5 94,503.5 95,504.5 100,504.5 101,503.5 103,504.5 104,503.5 105,504.5 115,504.5 116,503 117,499 118,492.5 120,492.5 121,494 122,496 124,494 126,495 127,495.5 129,494.5 134,494.5 135,497 136,506 136.5,513.5 138,513.5 138.5,506 139.5,497 140.5,504 140.5,506 141,512.5 144,512.5 145,511 146,512 148,508 150,507 153,506 154,505.5 156,508 157,509 158,505.5 159,505 162,508 164,508.5 166,507 168,506 171,505 173,504.5 190,504.5 191,502 193,501 194,503.5 200,503.5 202,502 203,503 205,501 207,500 216,500 217,497.5 221,497 221.5,500 222,508 223,509 225,510 227,515 228,516 230,512 233,511 239,510 241,513 242,516 249,516 251,510 255,506 263,506 264,513 270,513 272,516 274,512 280,511 281,510.5 306,510.5" fill="none" stroke="#2a62b8" stroke-width="1.05"/>
<path d="M140 497 V505" stroke="#2a62b8" stroke-width="2"/>
<text x="59.4" y="207.5" font-size="9.9" fill="#000" stroke="#000" stroke-width="0.12" text-anchor="start" textLength="38.1" lengthAdjust="spacingAndGlyphs" >BTCUSD</text>
<text x="447.8" y="206.8" font-size="11.1" fill="#000" stroke="#000" stroke-width="0.12" text-anchor="end" textLength="40.3" lengthAdjust="spacingAndGlyphs" >Символ:</text>
<rect x="457.5" y="193.5" width="322" height="20" fill="#e5e5e5" stroke="#adadad"/>
<text x="460.7" y="208" font-size="11.1" fill="#000" stroke="#000" stroke-width="0.12" text-anchor="start" textLength="136.3" lengthAdjust="spacingAndGlyphs" >BTCUSD, Bitcoin vs US Dollar</text>
<path d="M766.5 202 L771 206 L775.5 202" stroke="#444" fill="none" stroke-width="1"/>
<text x="447.8" y="232.8" font-size="11.1" fill="#000" stroke="#000" stroke-width="0.12" text-anchor="end" textLength="35.5" lengthAdjust="spacingAndGlyphs" >Объем:</text>
<rect x="457.5" y="219.5" width="104" height="20" fill="#ffffff" stroke="#7a7a7a"/>
<text x="463" y="233.2" font-size="11.1" fill="#000" stroke="#000" stroke-width="0.12" text-anchor="start" textLength="20.8" lengthAdjust="spacingAndGlyphs" >0.10</text>
<path d="M548.5 227.5 L553 231.5 L557.5 227.5" stroke="#444" fill="none" stroke-width="1"/>
<text x="448.2" y="259" font-size="11.1" fill="#000" stroke="#000" stroke-width="0.12" text-anchor="end" textLength="54.8" lengthAdjust="spacingAndGlyphs" >Стоп Лосс:</text>
<rect x="457.5" y="245.5" width="104" height="19" fill="#ffffff" stroke="#7a7a7a"/>
<text x="538.6" y="259" font-size="11.1" fill="#000" stroke="#000" stroke-width="0.12" text-anchor="end" textLength="20.8" lengthAdjust="spacingAndGlyphs" >0.00</text>
<rect x="545.5" y="245.5" width="16" height="18" fill="#f0f0f0" stroke="#b4b4b4"/>
<path d="M546 254.5 H561" stroke="#d0d0d0"/>
<path d="M550 253 L553.5 249.5 L557 253 Z M550 256 L553.5 259.5 L557 256 Z" fill="#000"/>
<text x="665.8" y="259" font-size="11.1" fill="#000" stroke="#000" stroke-width="0.12" text-anchor="end" textLength="69.6" lengthAdjust="spacingAndGlyphs" >Тейк Профит:</text>
<rect x="674.5" y="245.5" width="104" height="19" fill="#ffffff" stroke="#7a7a7a"/>
<text x="756" y="259" font-size="11.1" fill="#000" stroke="#000" stroke-width="0.12" text-anchor="end" textLength="20.8" lengthAdjust="spacingAndGlyphs" >0.00</text>
<rect x="762.5" y="245.5" width="16" height="18" fill="#f0f0f0" stroke="#b4b4b4"/>
<path d="M763 254.5 H778" stroke="#d0d0d0"/>
<path d="M767 253 L770.5 249.5 L774 253 Z M767 256 L770.5 259.5 L774 256 Z" fill="#000"/>
<text x="448.2" y="285" font-size="11.1" fill="#000" stroke="#000" stroke-width="0.12" text-anchor="end" textLength="71.2" lengthAdjust="spacingAndGlyphs" >Комментарий:</text>
<rect x="457.5" y="271.5" width="322" height="19" fill="#ffffff" stroke="#7a7a7a"/>
<rect x="359.5" y="332.5" width="427" height="187" fill="none" stroke="#dcdcdc"/>
<rect x="365" y="326" width="90" height="10" fill="#f0f0f0" />
<text x="367.7" y="337" font-size="11.1" fill="#000" stroke="#000" stroke-width="0.12" text-anchor="start" textLength="150" lengthAdjust="spacingAndGlyphs" >Исполнение по рыночной цене</text>
<text x="448.2" y="311" font-size="11.1" fill="#000" stroke="#000" stroke-width="0.12" text-anchor="end" textLength="21" lengthAdjust="spacingAndGlyphs" >Тип:</text>
<rect x="457.5" y="297.5" width="322" height="20" fill="#cce4f7" stroke="#005499"/>
<text x="460" y="311.5" font-size="11.1" fill="#000" stroke="#000" stroke-width="0.12" text-anchor="start" textLength="111.7" lengthAdjust="spacingAndGlyphs" >Рыночное исполнение</text>
<path d="M766.5 305.5 L771 309.5 L775.5 305.5" stroke="#444" fill="none" stroke-width="1"/>
<rect x="780" y="322" width="4" height="26" fill="#000" opacity="0.08"/>
<rect x="461" y="346" width="323" height="3" fill="#000" opacity="0.08"/>
<rect x="457" y="318" width="323" height="28" fill="#ffffff" />
<rect x="457.5" y="317.5" width="322" height="28" fill="none" stroke="#646464"/>
<rect x="458" y="332" width="321" height="13" fill="#0078d7" />
<path d="M458.5 344.5 H778.5" stroke="#ffffff" stroke-dasharray="1 1" opacity="0.6"/>
<text x="459.4" y="329.9" font-size="11.1" fill="#000" stroke="#000" stroke-width="0.12" text-anchor="start" textLength="111.7" lengthAdjust="spacingAndGlyphs" >Рыночное исполнение</text>
<text x="459.4" y="342.3" font-size="11.1" fill="#ffffff" stroke="#ffffff" stroke-width="0.12" text-anchor="start" textLength="100.2" lengthAdjust="spacingAndGlyphs" >Отложенный ордер</text>
<rect x="456.6" y="332.6" width="112.8" height="15.3" fill="none" stroke="#b03a22" stroke-width="2"/>
<path d="M376.4 372.1 L435 346.5 L434.5 341 L449.5 343 L441 355.5 L437 351.1 L377.6 374.9 Z" fill="#c8321a" stroke="#c8321a" stroke-width="1.3" stroke-linejoin="round"/>
<text x="469.3" y="383.3" font-size="25.5" fill="#000" stroke="#000" stroke-width="0.12" text-anchor="start" textLength="89.7" lengthAdjust="spacingAndGlyphs" >6433.75</text>
<path d="M576.2 364.5 L568.8 387.5" stroke="#000" stroke-width="2"/>
<text x="586.8" y="383.3" font-size="25.5" fill="#000" stroke="#000" stroke-width="0.12" text-anchor="start" textLength="89.2" lengthAdjust="spacingAndGlyphs" >6469.51</text>
<rect x="375.5" y="408.5" width="185" height="20" fill="#f0f0f0" stroke="#adadad"/>
<rect x="377" y="410" width="182" height="17" rx="1" fill="#ff7b7b"/>
<text x="433.3" y="422.8" font-size="11.1" fill="#000" stroke="#000" stroke-width="0.12" text-anchor="start" textLength="67.7" lengthAdjust="spacingAndGlyphs" >Sell by Market</text>
<rect x="585.5" y="408.5" width="185" height="20" fill="#f0f0f0" stroke="#adadad"/>
<rect x="587" y="410" width="182" height="17" rx="1" fill="#9ebdfd"/>
<text x="642.1" y="422.8" font-size="11.1" fill="#000" stroke="#000" stroke-width="0.12" text-anchor="start" textLength="69.9" lengthAdjust="spacingAndGlyphs" >Buy by Market</text>
<rect x="375" y="438" width="396" height="21" fill="#cccccc" />
<text x="374.8" y="482.8" font-size="11.1" fill="#000" stroke="#000" stroke-width="0.12" text-anchor="start" textLength="394.7" lengthAdjust="spacingAndGlyphs" >Внимание! Цена исполнения ордера зависит от текущей рыночной ситуации,</text>
<text x="428.4" y="495.6" font-size="11.1" fill="#000" stroke="#000" stroke-width="0.12" text-anchor="start" textLength="287.6" lengthAdjust="spacingAndGlyphs" >разница с запрошенной ценой может быть значительна!</text>
</svg>
</body></html>
